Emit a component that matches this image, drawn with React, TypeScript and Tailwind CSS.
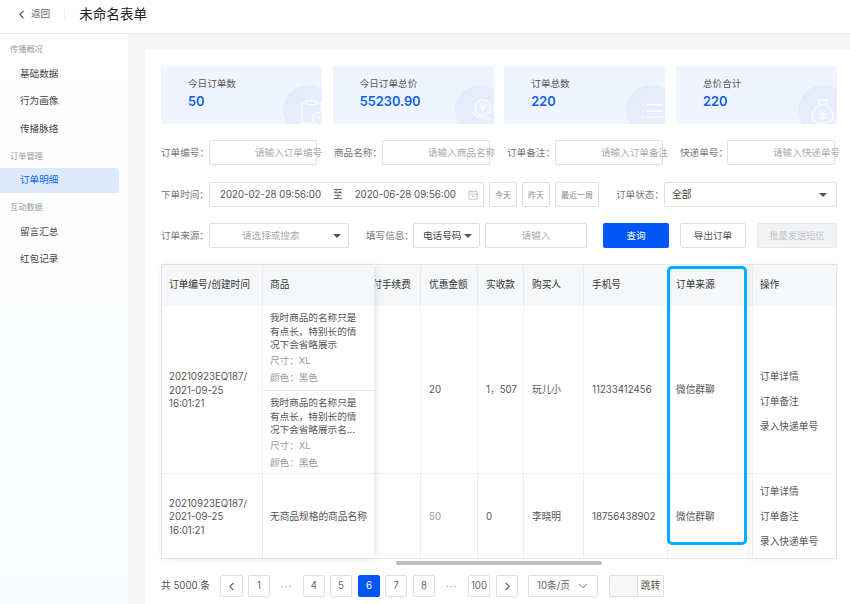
import { ChevronDown, ChevronLeft, ChevronRight } from 'lucide-react';
import type { ReactNode } from 'react';

const FONT = 'font-[Inter,"Noto_Sans_CJK_SC",sans-serif]';
const BOX = 'rounded-[2px] border border-[#dcdfe4] bg-white';

const nav = [
  { title: '传播概况', items: ['基础数据', '行为画像', '传播脉络'] },
  { title: '订单管理', items: ['订单明细'] },
  { title: '互动数据', items: ['留言汇总', '红包记录'] },
];

function Caret() {
  return <span className="h-0 w-0 border-x-[4px] border-t-[4px] border-x-transparent border-t-[#555]" />;
}

function ClipIcon() {
  return (
    <svg viewBox="0 0 28 30" className="absolute right-[-3px] bottom-[-2px] h-[28px] w-[26px]" fill="none" stroke="#fff" strokeOpacity="0.8" strokeWidth="1.6">
      <path d="M8 5H3v22h10M19 5h5v9M8 3h11v4H8z" />
      <circle cx="21" cy="22" r="6.5" />
      <path d="M21 18.5V22h3" />
    </svg>
  );
}

function CoinIcon() {
  return (
    <svg viewBox="0 0 28 30" className="absolute right-0 bottom-0 h-[26px] w-[24px]" fill="none" stroke="#fff" strokeOpacity="0.8" strokeWidth="1.6">
      <circle cx="15" cy="11" r="9" />
      <path d="M12 7l3 4 3-4M11.5 12h7M15 11v6M2 17c3 0 4 4 8 5h8c3 0 5 1 6 3" />
    </svg>
  );
}

function ListIcon() {
  return (
    <svg viewBox="0 0 24 20" className="absolute right-[2px] bottom-[4px] h-[18px] w-[22px]" fill="none" stroke="#fff" strokeOpacity="0.95" strokeWidth="1.6">
      <path d="M1 3h1.5M6 3h18M1 10h1.5M6 10h18M1 17h1.5M6 17h18" />
    </svg>
  );
}

function BagIcon() {
  return (
    <svg viewBox="0 0 26 30" className="absolute right-[3px] bottom-0 h-[26px] w-[23px]" fill="none" stroke="#fff" strokeOpacity="0.85" strokeWidth="1.6">
      <path d="M8 2h10l-2 6h-6zM9 8C4 12 1 17 1 21c0 5 4 8 12 8s12-3 12-8c0-4-3-9-8-13" />
      <path d="M9 14l4 4 4-4M8.5 19h9M8.5 23h9M13 18v8" />
    </svg>
  );
}

function StatCard({ label, value, icon }: { label: string; value: string; icon: ReactNode }) {
  return (
    <div className="relative h-[58px] overflow-hidden rounded-[2px] bg-[#f0f4fe] pt-[10px] pl-[27px]">
      <div className="text-[9.6px] leading-[16px] text-[#555]">{label}</div>
      <div className="text-[12.8px] leading-[20px] font-semibold text-[#0f62e6]">{value}</div>
      <div className="absolute top-[19px] left-[122px] h-[50px] w-[50px] rounded-full bg-gradient-to-br from-[#e3eafb] to-[#ebf0fd]" />
      {icon}
    </div>
  );
}

function TextField({ label, placeholder, labelClass }: { label: string; placeholder: string; labelClass: string }) {
  return (
    <div className="flex items-center">
      <span className={`shrink-0 pt-[2px] text-[9.6px] whitespace-nowrap text-[#777] ${labelClass}`}>{label}：</span>
      <div className={`relative h-[25px] w-[108px] ${BOX}`}>
        <span className="absolute top-[5px] left-[45px] text-[9.6px] whitespace-nowrap text-[#aaa]">{placeholder}</span>
      </div>
    </div>
  );
}

function Pill({ children, className }: { children: ReactNode; className: string }) {
  return (
    <div className={`flex h-[25px] items-center justify-center pt-[1px] text-[8px] text-[#888] ${BOX} ${className}`}>{children}</div>
  );
}

function Goods({ name }: { name: string }) {
  return (
    <div className="h-[84px] pt-[5px] pr-[15px] pl-[7px] text-[9.6px] leading-[13.6px] text-[#555]">
      <div className="h-[40px] break-all">{name}</div>
      <div className="mt-[2px] leading-[16px] text-[#999]">尺寸：XL</div>
      <div className="leading-[17px] text-[#999]">颜色：黑色</div>
    </div>
  );
}

function HeadCell({ children, className = '' }: { children: ReactNode; className?: string }) {
  return (
    <div className={`flex h-[41px] items-center bg-[#f6f7f9] px-[8px] text-[9.7px] whitespace-nowrap text-[#333] ${className}`}>
      {children}
    </div>
  );
}

function BodyCell({ children, className = '' }: { children?: ReactNode; className?: string }) {
  return <div className={`flex items-center px-[8px] pt-[2px] text-[9.7px] text-[#555] ${className}`}>{children}</div>;
}

function OrderTable() {
  const line = 'border-r border-[#e9ecf0]';
  const rowLine = 'border-b border-[#eef0f3]';
  const actions = (offset: string) => (
    <div className={`flex flex-col gap-[11px] leading-[14px] ${offset}`}>
      <span>订单详情</span>
      <span>订单备注</span>
      <span>录入快递单号</span>
    </div>
  );
  return (
    <div className="relative h-[295px] border border-[#e6e8ec] bg-white">
      <div className="grid h-full grid-cols-[101px_112px_46px_57px_46px_60px_84px_85px_1fr] grid-rows-[41px_168px_1fr]">
        <HeadCell className={`pl-[7px] ${line}`}>订单编号/创建时间</HeadCell>
        <HeadCell className="pl-[7px]">商品</HeadCell>
        <HeadCell className={`justify-end overflow-hidden !px-0 ${line}`}>
          <span className="mr-[9px] shrink-0">付手续费</span>
        </HeadCell>
        <HeadCell className={line}>优惠金额</HeadCell>
        <HeadCell className={line}>实收款</HeadCell>
        <HeadCell className={line}>购买人</HeadCell>
        <HeadCell className={line}>手机号</HeadCell>
        <HeadCell className={line}>订单来源</HeadCell>
        <HeadCell className="pl-[7px]">操作</HeadCell>

        <BodyCell className={`pl-[7px] leading-[13.6px] ${line} ${rowLine}`}>
          <span>
            20210923EQ187/
            <br />
            2021-09-25
            <br />
            16:01:21
          </span>
        </BodyCell>
        <div className={`flex flex-col ${rowLine}`}>
          <div className="border-b border-[#e4e7eb]">
            <Goods name="我时商品的名称只是有点长，特别长的情况下会省略展示" />
          </div>
          <Goods name="我时商品的名称只是有点长，特别长的情况下会省略展示名..." />
        </div>
        <BodyCell className={`${line} ${rowLine}`} />
        <BodyCell className={`${line} ${rowLine}`}>20</BodyCell>
        <BodyCell className={`whitespace-nowrap ${line} ${rowLine}`}>1，507</BodyCell>
        <BodyCell className={`${line} ${rowLine}`}>玩儿小</BodyCell>
        <BodyCell className={`${line} ${rowLine}`}>11233412456</BodyCell>
        <BodyCell className={`${line} ${rowLine}`}>微信群聊</BodyCell>
        <BodyCell className={`pl-[7px] ${rowLine}`}>{actions('mt-[23px]')}</BodyCell>

        <BodyCell className={`pl-[7px] leading-[13.6px] ${line}`}>
          <span>
            20210923EQ187/
            <br />
            2021-09-25
            <br />
            16:01:21
          </span>
        </BodyCell>
        <BodyCell className="pl-[7px] whitespace-nowrap">无商品规格的商品名称</BodyCell>
        <BodyCell className={line} />
        <BodyCell className={`text-[#999] ${line}`}>50</BodyCell>
        <BodyCell className={line}>0</BodyCell>
        <BodyCell className={line}>李晓明</BodyCell>
        <BodyCell className={line}>18756438902</BodyCell>
        <BodyCell className={line}>微信群聊</BodyCell>
        <BodyCell className="pl-[7px]">{actions('')}</BodyCell>
      </div>
      {/* shadows of the pinned columns */}
      <div className="pointer-events-none absolute top-0 bottom-0 left-0 w-[212px] shadow-[2px_0_8px_rgba(0,0,0,0.1)]" />
      <div className="pointer-events-none absolute top-0 right-0 bottom-0 w-[85px] shadow-[-2px_0_8px_rgba(0,0,0,0.06)]" />
      <div className="pointer-events-none absolute top-[1px] left-[505px] h-[279px] w-[80px] rounded-[5px] border-[3px] border-[#00aeff]" />
    </div>
  );
}

function PageBtn({ children, active, className = '' }: { children: ReactNode; active?: boolean; className?: string }) {
  return (
    <div
      className={`flex h-[22px] items-center justify-center rounded-[2px] border text-[9.7px] ${
        active ? 'border-[#0057f5] bg-[#0057f5] text-white' : 'border-[#dcdfe4] bg-white text-[#666]'
      } ${className}`}
    >
      {children}
    </div>
  );
}

export default function App() {
  return (
    <div className={`flex h-[604px] w-[850px] flex-col overflow-hidden bg-[#f5f5f5] ${FONT}`}>
      <header className="flex h-[34px] shrink-0 items-center border-b border-[#ebebeb] bg-white pb-[5px]">
        <ChevronLeft className="ml-[15px] h-[13px] w-[13px] text-[#555]" strokeWidth={2} />
        <span className="ml-[3px] text-[9.6px] text-[#666]">返回</span>
        <span className="ml-[14px] h-[14px] w-px bg-[#eee]" />
        <span className="ml-[14px] text-[13.6px] text-[#222]">未命名表单</span>
      </header>

      <div className="flex min-h-0 flex-1">
        <aside className="w-[128px] shrink-0 bg-gradient-to-b from-white to-[#f9fbfe]">
          <div className="pt-[9px] pr-[9px]">
            {nav.map((group, i) => (
              <div key={group.title} className={i > 0 ? 'mt-[8px]' : ''}>
                <div className="h-[18.5px] pl-[10px] text-[8.2px] leading-[12px] text-[#999]">{group.title}</div>
                {group.items.map((item) => (
                  <div
                    key={item}
                    className={`flex h-[25px] items-center rounded-r-[3px] pl-[20px] text-[9.6px] ${
                      item === '订单明细' ? 'mb-[5.5px] bg-[#dce9fd] text-[#1166e6]' : 'mb-[2.5px] text-[#444]'
                    }`}
                  >
                    {item}
                  </div>
                ))}
              </div>
            ))}
          </div>
        </aside>

        <main className="mt-[16px] ml-[17px] flex-1 bg-white pt-[16px] pr-[13px] pl-[16px]">
          <div className="grid grid-cols-4 gap-x-[10.7px]">
            <StatCard label="今日订单数" value="50" icon={<ClipIcon />} />
            <StatCard label="今日订单总价" value="55230.90" icon={<CoinIcon />} />
            <StatCard label="订单总数" value="220" icon={<ListIcon />} />
            <StatCard label="总价合计" value="220" icon={<BagIcon />} />
          </div>

          <div className="mt-[16px] flex h-[25px]">
            <TextField label="订单编号" placeholder="请输入订单编号" labelClass="w-[48px]" />
            <div className="ml-[17px]">
              <TextField label="商品名称" placeholder="请输入商品名称" labelClass="w-[48px]" />
            </div>
            <div className="ml-[17px]">
              <TextField label="订单备注" placeholder="请输入订单备注" labelClass="w-[48px]" />
            </div>
            <div className="ml-[17px]">
              <TextField label="快递单号" placeholder="请输入快递单号" labelClass="w-[47px]" />
            </div>
          </div>

          <div className="mt-[17px] flex h-[25px] items-center">
            <span className="w-[48px] shrink-0 pt-[2px] text-[9.6px] whitespace-nowrap text-[#777]">下单时间：</span>
            <div className={`flex h-[25px] w-[275px] items-center pt-[1px] pl-[10px] text-[9.7px] whitespace-nowrap text-[#555] ${BOX}`}>
              <span className="w-[101px]">2020-02-28 09:56:00</span>
              <span className="ml-[12px]">至</span>
              <span className="ml-[12px] w-[101px]">2020-06-28 09:56:00</span>
              <svg viewBox="0 0 12 12" className="ml-[12px] h-[10px] w-[10px]" fill="none" stroke="#bbb" strokeWidth="1">
                <path d="M1 2h10v9H1zM1 5h10M3 0v2M9 0v2M4 7.5h4" />
              </svg>
            </div>
            <Pill className="ml-[5px] w-[28px]">今天</Pill>
            <Pill className="ml-[5px] w-[28px]">昨天</Pill>
            <Pill className="ml-[5px] w-[44px]">最近一周</Pill>
            <span className="ml-[17px] w-[48px] shrink-0 pt-[2px] text-[9.6px] whitespace-nowrap text-[#777]">订单状态：</span>
            <div className={`flex h-[25px] flex-1 items-center justify-between pt-[1px] pr-[9px] pl-[7px] text-[9.7px] text-[#444] ${BOX}`}>
              <span>全部</span>
              <Caret />
            </div>
          </div>

          <div className="mt-[16px] flex h-[25px] items-center">
            <span className="w-[48px] shrink-0 pt-[2px] text-[9.6px] whitespace-nowrap text-[#777]">订单来源：</span>
            <div className={`flex h-[25px] w-[140px] items-center justify-between pt-[1px] pr-[7px] pl-[32px] text-[9.6px] text-[#aaa] ${BOX}`}>
              <span>请选择或搜索</span>
              <Caret />
            </div>
            <span className="ml-[17px] w-[47px] shrink-0 pt-[2px] text-[9.6px] whitespace-nowrap text-[#777]">填写信息：</span>
            <div className={`flex h-[25px] w-[67px] items-center justify-between pt-[1px] pr-[7px] pl-[9px] text-[9.6px] whitespace-nowrap text-[#444] ${BOX}`}>
              <span>电话号码</span>
              <Caret />
            </div>
            <div className={`ml-[5px] flex h-[25px] w-[102px] items-center justify-center pt-[1px] text-[9.6px] text-[#aaa] ${BOX}`}>请输入</div>
            <div className="ml-[16px] flex h-[25px] w-[66px] items-center justify-center rounded-[2px] bg-[#0057f5] pt-[1px] text-[9.6px] text-white">查询</div>
            <div className={`ml-[11px] flex h-[25px] w-[66px] items-center justify-center pt-[1px] text-[9.6px] text-[#555] ${BOX}`}>导出订单</div>
            <div className="ml-[11px] flex h-[25px] w-[80px] items-center justify-center rounded-[2px] border border-[#e8e8ea] bg-[#f1f2f4] pt-[1px] text-[9.2px] text-[#c4c4c8]">批量发送短信</div>
          </div>

          <div className="mt-[16px]">
            <OrderTable />
          </div>

          <div className="mt-[2px] h-[4px] pl-[235px]">
            <div className="h-[4px] w-[206px] rounded-full bg-[#bdbdbd]" />
          </div>

          <div className="mt-[10px] flex h-[22px] items-center whitespace-nowrap">
            <span className="w-[59px] shrink-0 text-[9.7px] text-[#555]">共 5000 条</span>
            <PageBtn className="w-[23px]"><ChevronLeft className="h-[13px] w-[13px]" strokeWidth={2} /></PageBtn>
            <PageBtn className="ml-[5px] w-[22px]">1</PageBtn>
            <span className="w-[33px] text-center text-[10px] tracking-[1px] text-[#999]">···</span>
            <PageBtn className="w-[22px]">4</PageBtn>
            <PageBtn className="ml-[5px] w-[22px]">5</PageBtn>
            <PageBtn active className="ml-[6px] w-[22px]">6</PageBtn>
            <PageBtn className="ml-[5px] w-[22px]">7</PageBtn>
            <PageBtn className="ml-[6px] w-[22px]">8</PageBtn>
            <span className="w-[33px] text-center text-[10px] tracking-[1px] text-[#999]">···</span>
            <PageBtn className="w-[22px]">100</PageBtn>
            <PageBtn className="ml-[6px] w-[22px]"><ChevronRight className="h-[13px] w-[13px]" strokeWidth={2} /></PageBtn>
            <PageBtn className="ml-[10px] w-[70px] !justify-between pr-[7px] pl-[8px]">
              <span>10条/页</span>
              <ChevronDown className="h-[14px] w-[14px]" strokeWidth={1.5} />
            </PageBtn>
            <div className="ml-[11px] flex h-[22px] w-[55px] rounded-[2px] border border-[#dcdfe4] text-[9.7px] text-[#555]">
              <div className="w-[28px] border-r border-[#dcdfe4] bg-[#f8f8f9]" />
              <div className="flex flex-1 items-center justify-center">跳转</div>
            </div>
          </div>
        </main>
      </div>
    </div>
  );
}
